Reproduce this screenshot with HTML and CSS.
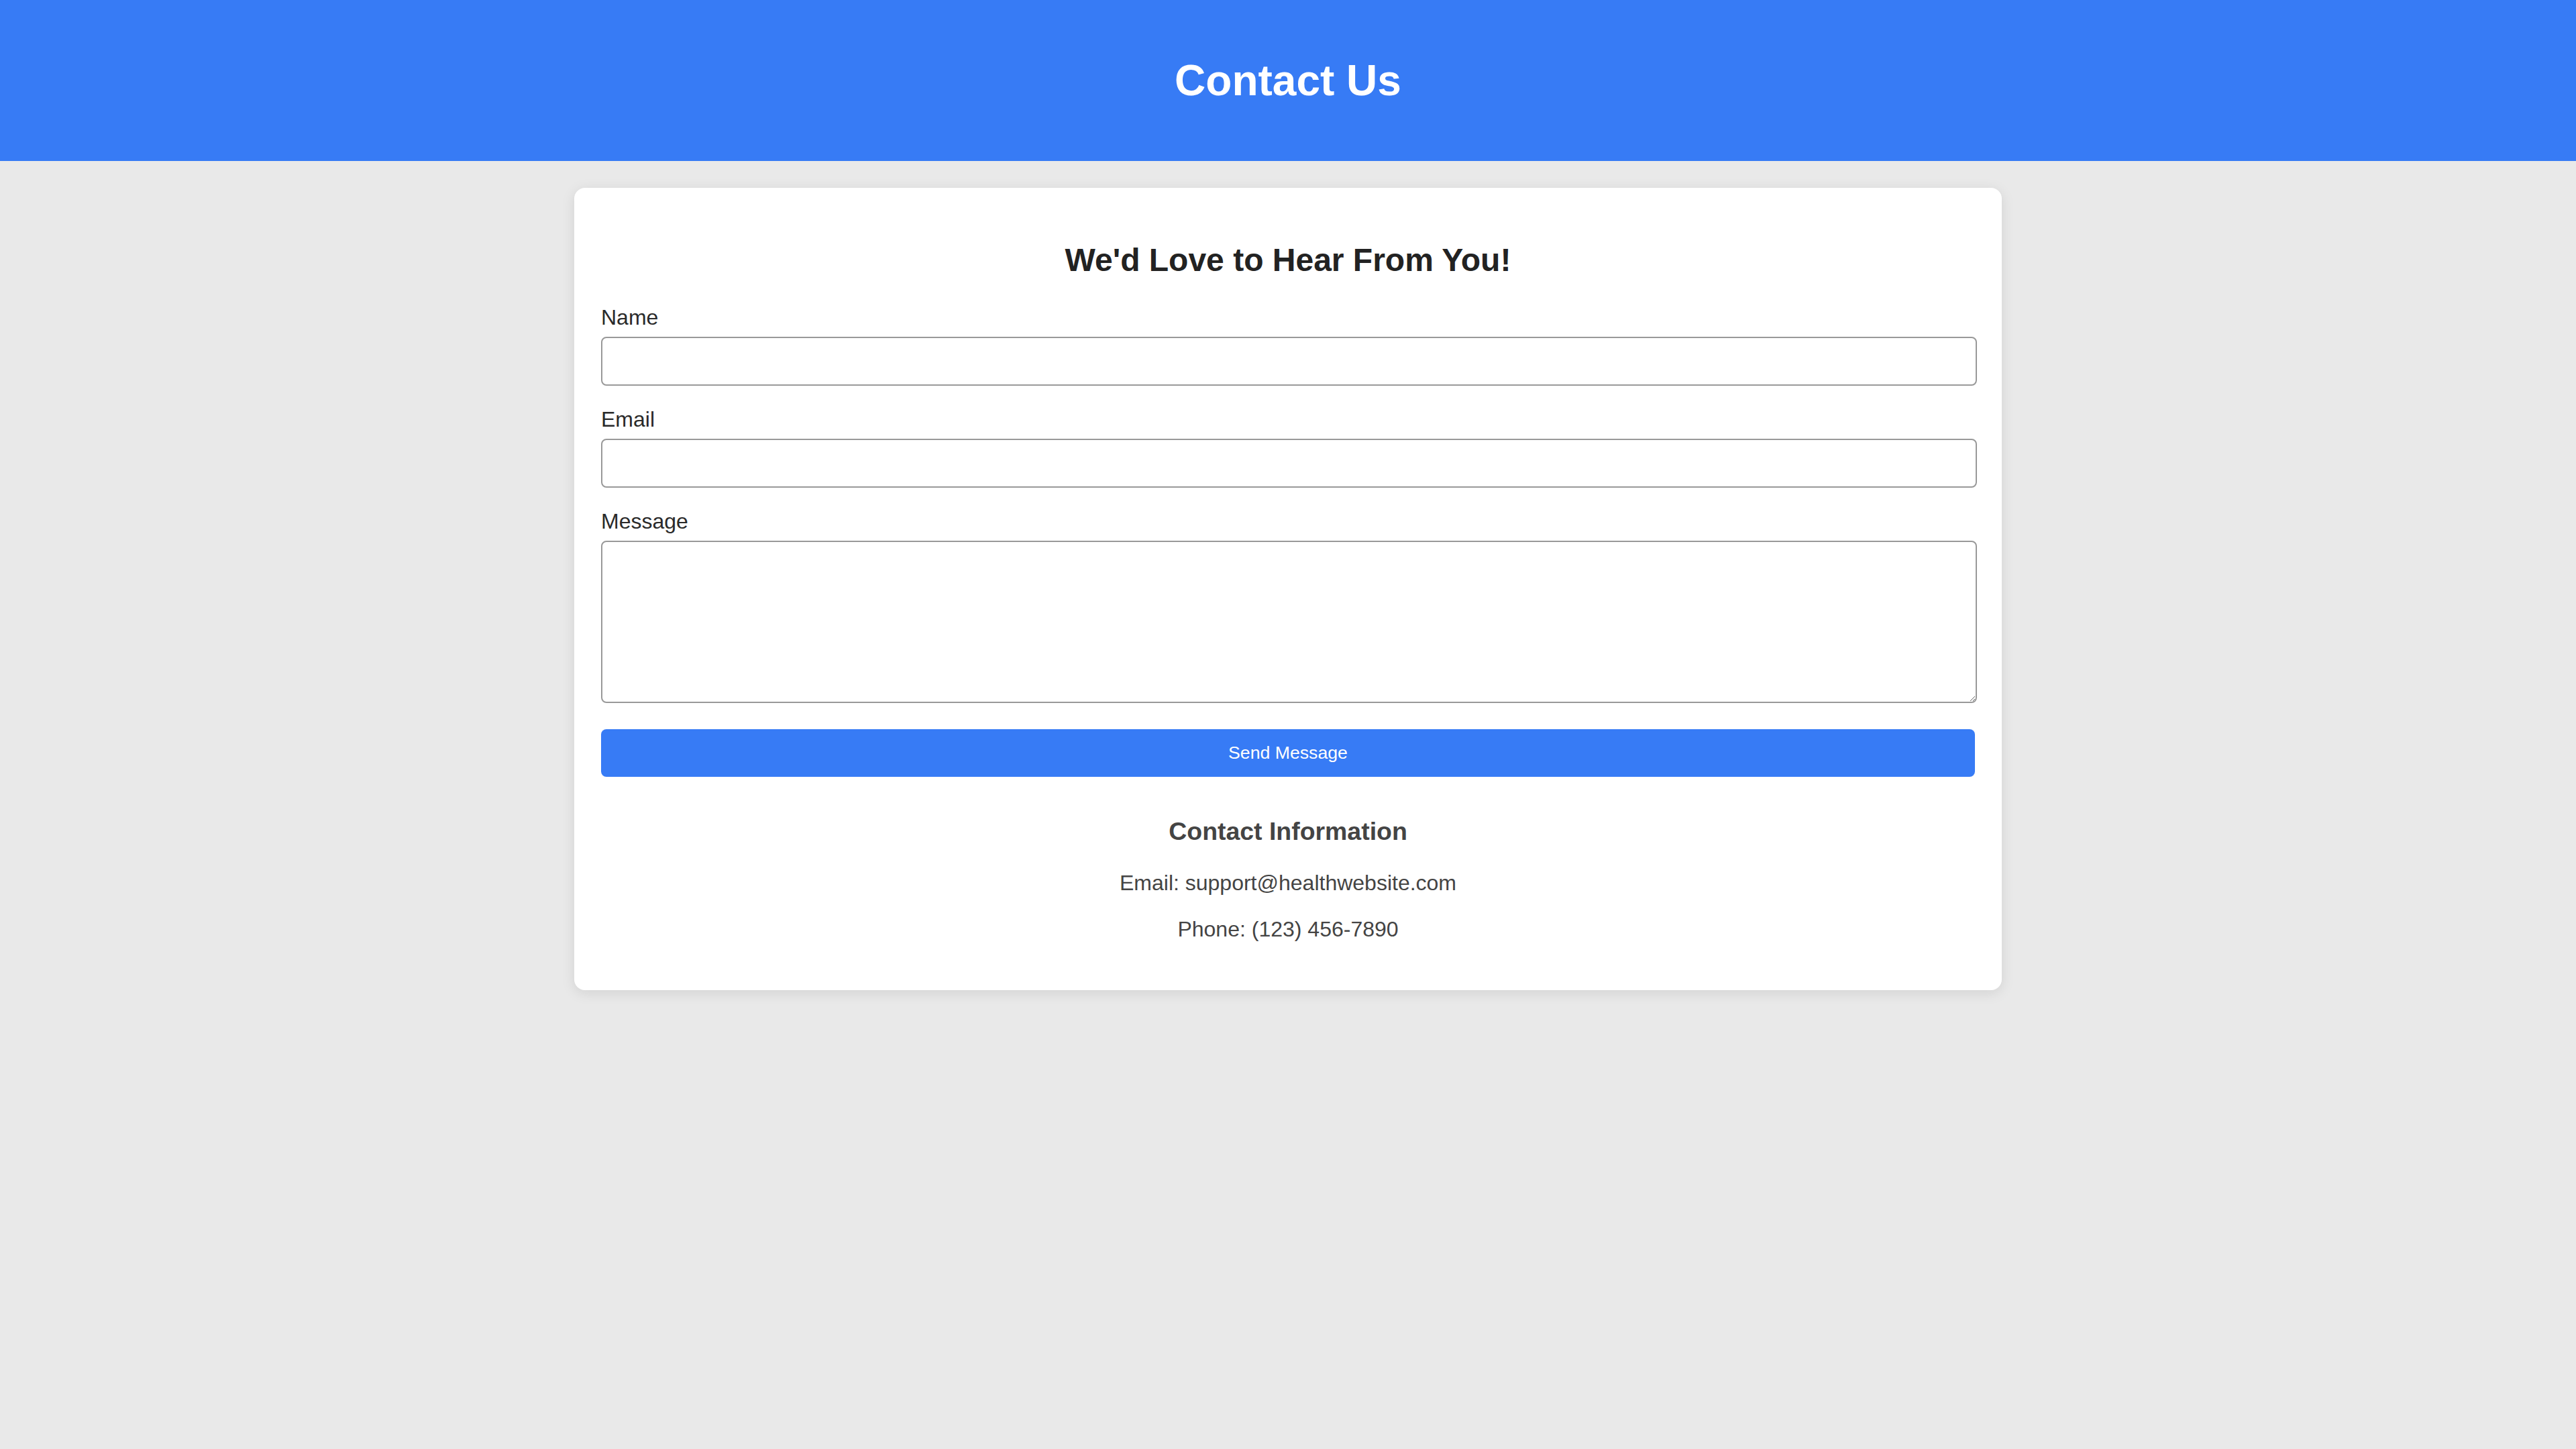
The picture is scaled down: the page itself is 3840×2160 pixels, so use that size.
FILE: index.html
```html
<!DOCTYPE html>
<html lang="en">
<head>
<meta charset="utf-8">
<title>Contact Us</title>
<link rel="stylesheet" href="styles.css">
</head>
<body>
<header class="site-header">
  <h1 class="site-title">Contact Us</h1>
</header>
<main class="card">
  <h2 class="card-title">We'd Love to Hear From You!</h2>
  <form class="contact-form">
    <label class="field-label" for="name">Name</label>
    <input class="field-input" type="text" id="name" name="name">
    <label class="field-label" for="email">Email</label>
    <input class="field-input" type="email" id="email" name="email">
    <label class="field-label" for="message">Message</label>
    <textarea class="field-input field-textarea" id="message" name="message"></textarea>
    <button class="send-btn" type="submit">Send Message</button>
  </form>
  <section class="contact-info">
    <h3 class="info-title">Contact Information</h3>
    <p class="info-line">Email: support@healthwebsite.com</p>
    <p class="info-line">Phone: (123) 456-7890</p>
  </section>
</main>
</body>
</html>
```

FILE: styles.css
```css
html, body {
  margin: 0;
  padding: 0;
}

body {
  background: #e9e9e9;
  font-family: "Liberation Sans", Arial, Helvetica, sans-serif;
  color: #333;
  min-height: 2160px;
}

.site-header {
  background: #377bf5;
  color: #fff;
  text-align: center;
  padding: 40px;
}

.site-title {
  margin: 43px 0;
  font-size: 64px;
  line-height: 74px;
  font-weight: bold;
}

.card {
  display: block;
  width: 2128px;
  box-sizing: border-box;
  margin: 40px auto 0;
  padding: 40px;
  background: #fff;
  border-radius: 16px;
  box-shadow: 0 4px 20px rgba(0, 0, 0, 0.1);
}

.card-title {
  margin: 40px 0;
  font-size: 48px;
  line-height: 55px;
  text-align: center;
  color: #222;
}

.contact-form {
  display: flex;
  flex-direction: column;
  margin: 0;
}

.field-label {
  display: block;
  font-size: 32px;
  line-height: 37px;
  margin-bottom: 10px;
  color: #2a2a2a;
}

.field-input {
  display: block;
  box-sizing: border-box;
  width: calc(100% + 3px);
  height: 73px;
  padding: 16px;
  margin: 0 0 32px;
  font-family: inherit;
  font-size: 32px;
  border: 2px solid #999;
  border-radius: 8px;
  background: #fff;
}

.field-textarea {
  height: 242px;
  margin-bottom: 39px;
}

.send-btn {
  display: block;
  width: 100%;
  height: 71px;
  padding: 20px;
  border: none;
  border-radius: 8px;
  background: #377bf5;
  color: #fff;
  font-family: inherit;
  font-size: 26.67px;
  line-height: 31px;
  cursor: pointer;
}

.contact-info {
  margin-top: 60px;
  text-align: center;
}

.info-title {
  margin: 0 0 37px;
  font-size: 37.44px;
  line-height: 43px;
  color: #444;
}

.info-line {
  margin: 32px 0;
  font-size: 32px;
  line-height: 37px;
  color: #444;
}

.info-line:first-of-type {
  margin-top: 0;
}
```
